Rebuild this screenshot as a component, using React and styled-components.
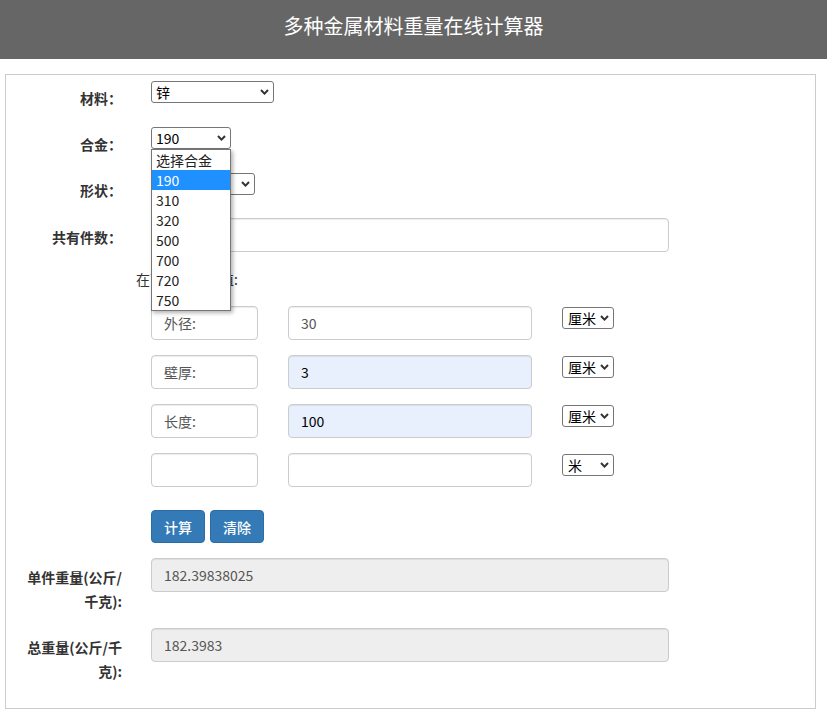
import React from "react";
import styled, { createGlobalStyle } from "styled-components";

const Global = createGlobalStyle`
  html, body { margin: 0; padding: 0; background: #fff; }
  body {
    font-family: "Noto Sans CJK SC", "Microsoft YaHei", sans-serif;
    font-size: 14px;
    color: #333;
  }
  * { box-sizing: border-box; }
`;

const Header = styled.header`
  height: 59px;
  background: #666;
  display: flex;
  justify-content: center;
`;

const Title = styled.h1`
  margin: 0;
  padding-top: 14px;
  font-size: 20px;
  line-height: 24px;
  font-weight: normal;
  color: #fff;
`;

const Panel = styled.div`
  margin: 15px 0 0 5px;
  width: 811px;
  border: 1px solid #ccc;
  padding: 6px 0 25px;
`;

const Form = styled.form`
  display: flex;
  flex-direction: column;
  gap: 15px;
`;

const Row = styled.div`
  display: grid;
  grid-template-columns: 116px 1fr;
  column-gap: 29px;
  height: ${(p) => p.$h}px;
  margin-top: ${(p) => p.$mt || 0}px;
`;

const Label = styled.label`
  text-align: right;
  font-weight: bold;
  line-height: 24px;
  padding-top: ${(p) => p.$pt}px;
  color: #333;
`;

const Controls = styled.div`
  display: flex;
  align-items: flex-start;
  gap: ${(p) => p.$gap || 0}px;
`;

const SelectWrap = styled.div`
  position: relative;
  width: ${(p) => p.$w}px;
  margin-top: ${(p) => p.$mt || 0}px;
`;

const NativeSelect = styled.select`
  appearance: none;
  -webkit-appearance: none;
  display: block;
  width: 100%;
  height: 22px;
  border: 1px solid #767676;
  border-radius: 3px;
  background: #fff;
  color: #000;
  font-family: inherit;
  font-size: 14px;
  line-height: 20px;
  padding: 0 0 0 ${(p) => p.$pl || 4}px;
  margin: 0;
  outline: none;
`;

const Chevron = styled.svg`
  position: absolute;
  right: 5px;
  top: 8px;
  width: 9px;
  height: 6px;
  pointer-events: none;
`;

const DropList = styled.ul`
  position: absolute;
  top: 22px;
  left: 0;
  width: 100%;
  margin: 0;
  padding: 0;
  list-style: none;
  background: #fff;
  border: 1px solid #767676;
  box-shadow: 2px 2px 4px rgba(0, 0, 0, 0.3);
  z-index: 10;
`;

const DropItem = styled.li`
  height: 20px;
  line-height: 20px;
  padding-left: 4px;
  font-size: 14px;
  color: ${(p) => (p.$active ? "#fff" : "#222")};
  background: ${(p) => (p.$active ? "#1e90ff" : "transparent")};
`;

const Input = styled.input`
  display: block;
  width: ${(p) => p.$w}px;
  height: 34px;
  border: 1px solid #ccc;
  border-radius: 4px;
  padding: 6px 12px;
  font-family: inherit;
  font-size: 14px;
  color: ${(p) => (p.$auto ? "#000" : "#555")};
  background: ${(p) => (p.$ro ? "#eee" : p.$auto ? "#e8f0fe" : "#fff")};
  box-shadow: inset 0 1px 1px rgba(0, 0, 0, 0.075);
  outline: none;
`;

const Hint = styled.div`
  height: 24px;
  line-height: 24px;
  padding-left: 130px;
  color: #333;
`;

const Button = styled.button`
  width: 54px;
  height: 33px;
  border: 1px solid #2e6da4;
  border-radius: 4px;
  background: #337ab7;
  color: #fff;
  font-family: inherit;
  font-size: 14px;
  font-weight: 500;
  padding: 0;
  cursor: pointer;
`;

function Select({ w, value, options, mt, pl, open, activeIndex }) {
  return (
    <SelectWrap $w={w} $mt={mt}>
      <NativeSelect $pl={pl} defaultValue={value}>
        {options.map((o) => (
          <option key={o}>{o}</option>
        ))}
      </NativeSelect>
      <Chevron viewBox="0 0 9 6">
        <path d="M1 1 L4.5 4.6 L8 1" fill="none" stroke="#333" strokeWidth="2" />
      </Chevron>
      {open && (
        <DropList>
          {open.map((o, i) => (
            <DropItem key={o} $active={i === activeIndex}>
              {o}
            </DropItem>
          ))}
        </DropList>
      )}
    </SelectWrap>
  );
}

const alloys = ["选择合金", "190", "310", "320", "500", "700", "720", "750"];

const dims = [
  { label: "外径:", value: "30", unit: "厘米" },
  { label: "壁厚:", value: "3", unit: "厘米", auto: true },
  { label: "长度:", value: "100", unit: "厘米", auto: true },
  { label: "", value: "", unit: "米" },
];

export default function App() {
  return (
    <>
      <Global />
      <Header>
        <Title>多种金属材料重量在线计算器</Title>
      </Header>
      <Panel>
        <Form onSubmit={(e) => e.preventDefault()}>
          <Row $h={31}>
            <Label $pt={5}>材料：</Label>
            <Controls>
              <Select w={123} value="锌" options={["锌", "铜", "铝", "钢"]} />
            </Controls>
          </Row>
          <Row $h={31}>
            <Label $pt={5}>合金：</Label>
            <Controls>
              <Select w={80} value="190" options={alloys} open={alloys} activeIndex={1} />
            </Controls>
          </Row>
          <Row $h={30}>
            <Label $pt={5}>形状：</Label>
            <Controls>
              <Select w={104} value="圆管" options={["圆管", "圆棒", "板材"]} />
            </Controls>
          </Row>
          <Row $h={34}>
            <Label $pt={7}>共有件数：</Label>
            <Controls>
              <Input $w={518} defaultValue="" />
            </Controls>
          </Row>
          <Hint>在下面输入数值:</Hint>
          {dims.map((d, i) => (
            <Row $h={34} key={i}>
              <span />
              <Controls $gap={30}>
                <Input $w={107} defaultValue={d.label} readOnly />
                <Input $w={244} defaultValue={d.value} $auto={d.auto} />
                <Select
                  w={52}
                  mt={1}
                  pl={5}
                  value={d.unit}
                  options={d.unit === "米" ? ["米", "厘米", "毫米"] : ["厘米", "米", "毫米"]}
                />
              </Controls>
            </Row>
          ))}
          <Row $h={33} $mt={8}>
            <span />
            <Controls $gap={5}>
              <Button type="button">计算</Button>
              <Button type="button">清除</Button>
            </Controls>
          </Row>
          <Row $h={55}>
            <Label $pt={7}>
              单件重量(公斤/
              <br />
              千克):
            </Label>
            <Controls>
              <Input $w={518} $ro readOnly defaultValue="182.39838025" />
            </Controls>
          </Row>
          <Row $h={55}>
            <Label $pt={7}>
              总重量(公斤/千
              <br />
              克):
            </Label>
            <Controls>
              <Input $w={518} $ro readOnly defaultValue="182.3983" />
            </Controls>
          </Row>
        </Form>
      </Panel>
    </>
  );
}
